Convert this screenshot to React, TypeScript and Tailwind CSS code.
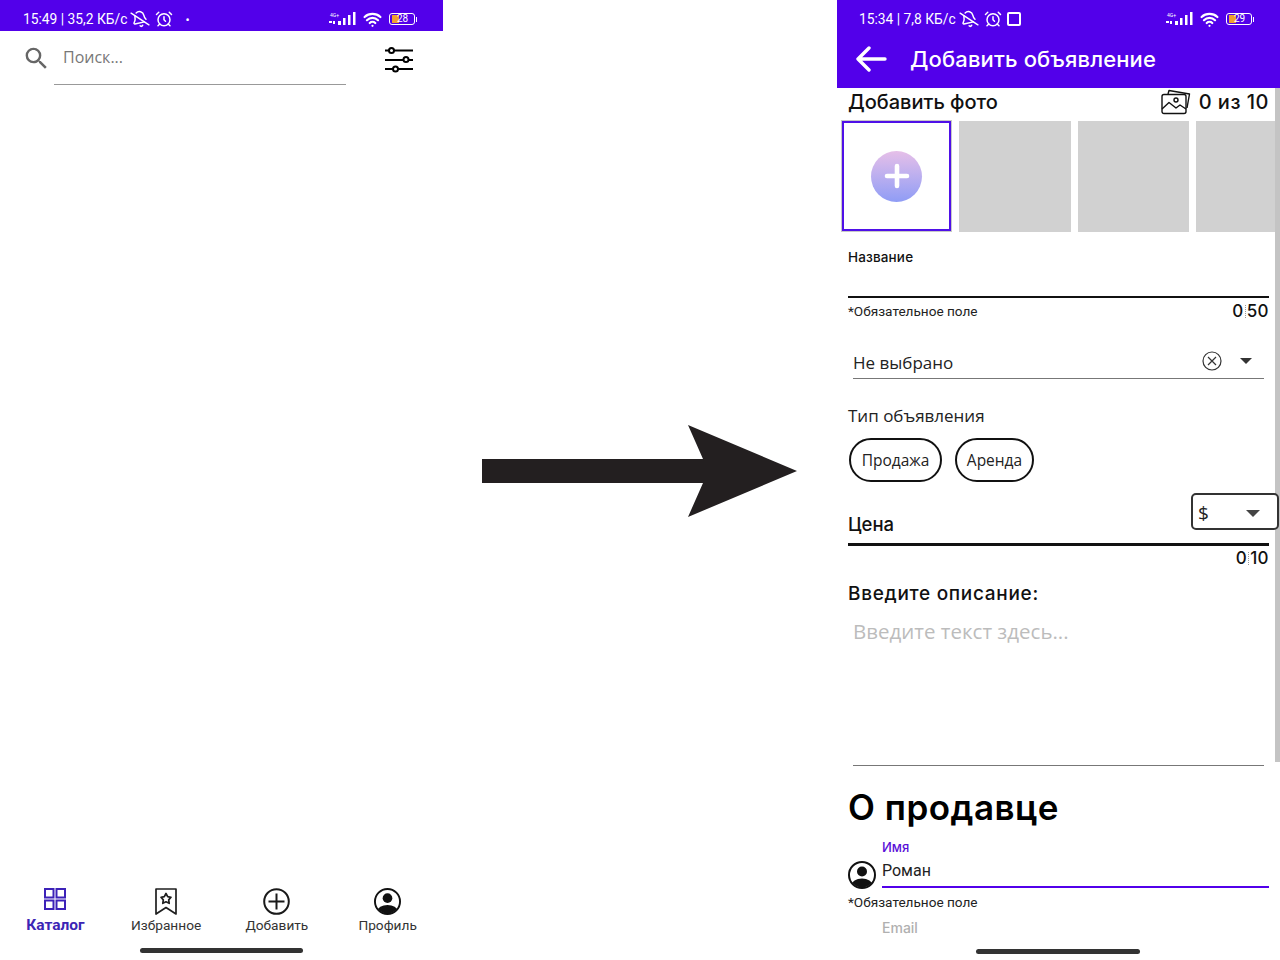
import { AlarmClock, BellOff, Wifi } from 'lucide-react';
import { MdSearch } from 'react-icons/md';

const roboto = { fontFamily: 'Roboto, sans-serif' };
const openSans = { fontFamily: '"Open Sans", sans-serif' };

const SignalIcon = () => (
  <svg width="27" height="14" viewBox="0 0 27 14" fill="white">
    <text x="1" y="5" fontSize="5" fill="white" style={roboto}>4G+</text>
    <rect x="0" y="9" width="3" height="2" />
    <rect x="4" y="9" width="2" height="3" />
    <rect x="9" y="9" width="3" height="4" />
    <rect x="14" y="6" width="2.5" height="7" />
    <rect x="19" y="3" width="2.5" height="10" />
    <rect x="24" y="0" width="2.5" height="13" />
  </svg>
);

const BatteryIcon = ({ level }: { level: string }) => (
  <div className="flex items-center">
    <div className="relative flex h-[12px] w-[26px] items-center rounded-[3px] border border-white">
      <div className="ml-[2px] h-[8px] w-[7px] bg-[#f0a030]" />
      <span className="absolute left-[7px] top-[-1px] text-[10px] leading-[12px] text-white" style={roboto}>{level}</span>
    </div>
    <div className="ml-[1px] h-[5px] w-[1px] bg-white" />
  </div>
);

const StatusBar = ({ label, children }: { label: string; children: React.ReactNode }) => (
  <div className="flex h-[38px] items-center justify-between pl-[23px] pr-[26px] text-white">
    <div className="flex items-center gap-[4px]">
      <span className="text-[13.8px] leading-[20px]" style={roboto}>{label}</span>
      {children}
    </div>
    <div className="flex items-center gap-[6px]">
      <SignalIcon />
      <Wifi className="h-[19px] w-[21px]" strokeWidth={2.8} />
      <BatteryIcon level={label.startsWith('15:49') ? '28' : '29'} />
    </div>
  </div>
);

const FilterIcon = () => (
  <svg width="30" height="26" viewBox="0 0 30 26" fill="none" stroke="black" strokeWidth="2">
    <path d="M1 3.5H29M1 13H29M1 22H29" />
    <circle cx="7.5" cy="3.5" r="2.5" fill="white" />
    <circle cx="22" cy="12.5" r="2.5" fill="white" />
    <circle cx="11.5" cy="22" r="2.5" fill="white" />
  </svg>
);

const GridIcon = () => (
  <svg width="22" height="22" viewBox="0 0 22 22" fill="none" stroke="#3d22b8" strokeWidth="2">
    <rect x="1" y="1" width="8.5" height="8.5" />
    <rect x="12.5" y="1" width="8.5" height="8.5" />
    <rect x="1" y="12.5" width="8.5" height="8.5" />
    <rect x="12.5" y="12.5" width="8.5" height="8.5" />
  </svg>
);

const BookmarkIcon = () => (
  <svg width="22" height="27" viewBox="0 0 22 27" fill="none" stroke="#1f1f1f" strokeWidth="1.7">
    <path d="M1 1H21V26L11 19.5L1 26Z" strokeLinejoin="round" />
    <path d="M11 5.5L12.7 8.7L16 9.3L13.7 11.9L14.2 15.3L11 13.8L7.8 15.3L8.3 11.9L6 9.3L9.3 8.7Z" strokeLinejoin="round" />
  </svg>
);

const PlusCircleIcon = () => (
  <svg width="27" height="27" viewBox="0 0 27 27" fill="none" stroke="#1a1a1a" strokeWidth="2">
    <circle cx="13.5" cy="13.5" r="12.3" />
    <path d="M13.5 5.5V21.5M5.5 13.5H21.5" />
  </svg>
);

const AvatarIcon = ({ size }: { size: number }) => (
  <svg width={size} height={size} viewBox="0 0 28 28">
    <defs>
      <clipPath id={`avatar-${size}`}>
        <circle cx="14" cy="14" r="12.5" />
      </clipPath>
    </defs>
    <circle cx="14" cy="14" r="13" fill="white" stroke="#111" strokeWidth="2" />
    <circle cx="14" cy="10.5" r="5" fill="#111" />
    <ellipse cx="14" cy="24" rx="10.5" ry="6.5" fill="#111" clipPath={`url(#avatar-${size})`} />
  </svg>
);

const GalleryIcon = () => (
  <svg width="30" height="26" viewBox="0 0 30 26" fill="none" stroke="#111" strokeWidth="1.4" strokeLinejoin="round">
    <path d="M7 5L8 1.5L28.5 5L26 19" />
    <rect x="1" y="5.5" width="24" height="19" rx="2" fill="white" />
    <circle cx="15" cy="11" r="2" />
    <path d="M1 20L8 13.5L15 19L19 16L25 20" />
  </svg>
);

const Counter = ({ left, right }: { left: string; right: string }) => (
  <div className="flex items-center font-medium text-[17px] leading-[16px] tracking-[0.4px] text-[#111]">
    {left}
    <span className="mx-[1px] h-[13px] border-l border-dotted border-[#999]" />
    {right}
  </div>
);

const navItems = [
  { label: 'Избранное', icon: <BookmarkIcon /> },
  { label: 'Добавить', icon: <PlusCircleIcon /> },
  { label: 'Профиль', icon: <AvatarIcon size={27} /> },
];

function CatalogPhone() {
  return (
    <div className="flex h-[960px] w-[443px] shrink-0 flex-col">
      <div className="h-[31px] overflow-hidden bg-[#5200ea]">
        <StatusBar label="15:49 | 35,2 КБ/с">
          <BellOff className="h-[18px] w-[18px] -rotate-12" />
          <AlarmClock className="ml-[2px] h-[18px] w-[18px]" />
          <span className="ml-[8px] text-[11px] leading-none">•</span>
        </StatusBar>
      </div>
      <div className="flex items-start pl-[25px] pr-[29px] pt-[16px]">
        <div className="h-[22px] w-[22px]">
          <MdSearch className="-ml-[3px] -mt-[3px] h-[29px] w-[29px] text-[#666]" />
        </div>
        <div className="ml-[7px] h-[38px] w-[292px] border-b border-[#999] pl-[9px]">
          <span className="block -translate-y-[1px] text-[16px] leading-[22px] text-[#777]" style={openSans}>Поиск...</span>
        </div>
        <div className="ml-auto">
          <FilterIcon />
        </div>
      </div>
      <div className="flex-1" />
      <div className="grid grid-cols-4">
        <div className="flex flex-col items-center">
          <div className="mt-[2px] flex h-[27px] items-start"><GridIcon /></div>
          <span className="text-[15.5px] font-bold leading-[20px] text-[#3b25b5]" style={roboto}>Каталог</span>
        </div>
        {navItems.map(item => (
          <div key={item.label} className="flex flex-col items-center">
            <div className="mt-[2px] flex h-[27px] items-start">{item.icon}</div>
            <span className="text-[13.7px] leading-[20px] text-[#333]" style={roboto}>{item.label}</span>
          </div>
        ))}
      </div>
      <div className="mb-[7px] ml-[140px] mt-[13px] h-[5px] w-[163px] rounded-full bg-[#333]" />
    </div>
  );
}

function ArrowDivider() {
  return (
    <div className="flex flex-1 items-center justify-center">
      <svg width="394" height="960" viewBox="443 0 394 960" fill="#231f20">
        <polygon points="482,459 703,459 688,425 797,471 688,517 703,483 482,483" />
      </svg>
    </div>
  );
}

function AddListingPhone() {
  return (
    <div className="relative h-[960px] w-[443px] shrink-0 overflow-hidden" style={{ fontFamily: 'Inter, sans-serif' }}>
      <div className="h-[88px] bg-[#5200ea]">
        <div className="-ml-[1px]">
          <StatusBar label="15:34 | 7,8 КБ/с">
            <BellOff className="h-[18px] w-[18px] -rotate-12" />
            <AlarmClock className="ml-[2px] h-[18px] w-[18px]" />
            <div className="ml-[1px] h-[14px] w-[14px] rounded-[2px] border-2 border-white" />
          </StatusBar>
        </div>
        <div className="flex h-[42px] items-center pl-[19px] text-white">
          <svg width="31" height="26" viewBox="0 0 31 26" fill="none" stroke="white" strokeWidth="3.4" strokeLinecap="round" strokeLinejoin="round">
            <path d="M29 13H3M13 2L2 13L13 24" />
          </svg>
          <span className="ml-[23px] text-[22px] font-medium leading-[28px] tracking-[0.15px]">Добавить объявление</span>
        </div>
      </div>

      <div className="flex h-[28px] items-center justify-between px-[11px]">
        <span className="text-[20px] font-medium leading-[24px] text-[#111]">Добавить фото</span>
        <div className="flex items-center gap-[8px]">
          <GalleryIcon />
          <span className="text-[20px] font-medium leading-[24px] tracking-[0.5px] text-[#111]">0 из 10</span>
        </div>
      </div>

      <div className="mt-[5px] flex gap-[7px] pl-[5px]">
        <div className="mr-[1px] flex h-[110px] w-[109px] shrink-0 items-center justify-center border-2 border-[#4f10e8] outline outline-1 outline-[#c8c8c8]">
          <div className="flex h-[51px] w-[51px] items-center justify-center rounded-full bg-gradient-to-b from-[#e6bfe8] to-[#8f9cf5]">
            <svg width="26" height="26" viewBox="0 0 26 26" stroke="white" strokeWidth="4.6" strokeLinecap="round">
              <path d="M13 3V23M3 13H23" />
            </svg>
          </div>
        </div>
        <div className="h-[111px] w-[111.5px] shrink-0 bg-[#d1d1d1]" />
        <div className="h-[111px] w-[111.5px] shrink-0 bg-[#d1d1d1]" />
        <div className="h-[111px] w-[111.5px] shrink-0 bg-[#d1d1d1]" />
      </div>

      <div className="px-[11px]">
        <div className="mt-[15px] text-[13.5px] font-medium leading-[20px] tracking-[0.15px] text-[#111]">Название</div>
        <div className="mt-[29px] h-[2px] bg-[#111]" />
        <div className="mt-[5px] flex h-[16px] items-center justify-between">
          <span className="text-[13.6px] leading-[16px] text-[#222]" style={roboto}>*Обязательное поле</span>
          <Counter left="0" right="50" />
        </div>
      </div>

      <div className="mx-[16px] mt-[32px] flex h-[24px] items-center justify-between">
        <span className="text-[17px] leading-[24px] text-[#222]" style={openSans}>Не выбрано</span>
        <div className="flex items-center">
          <svg width="20" height="20" viewBox="0 0 20 20" fill="none" stroke="#333" strokeWidth="1.2" className="-mt-[5px]">
            <circle cx="10" cy="10" r="9" />
            <path d="M6 6L14 14M14 6L6 14" />
          </svg>
          <div className="-mt-[5px] ml-[18px] mr-[12px] h-0 w-0 border-x-[6px] border-t-[6px] border-x-transparent border-t-[#333]" />
        </div>
      </div>
      <div className="mx-[16px] mt-[3px] h-[1px] bg-[#777]" />

      <div className="px-[11px]">
        <div className="mt-[25px] text-[17px] leading-[24px] text-[#222]" style={openSans}>Тип объявления</div>
        <div className="ml-[1px] mt-[10px] flex gap-[13px]">
          <div className="flex h-[44px] w-[93px] items-center justify-center rounded-full border-2 border-[#111] pt-[2px] text-[15.5px] text-[#222]" style={openSans}>Продажа</div>
          <div className="flex h-[44px] w-[79px] items-center justify-center rounded-full border-2 border-[#111] pt-[2px] text-[15.5px] text-[#222]" style={openSans}>Аренда</div>
        </div>

        <div className="mt-[11px] flex h-[43px] items-start justify-between">
          <span className="mt-[19px] text-[18.5px] font-medium leading-[24px] text-[#111]">Цена</span>
          {/* select sits over the scrollbar */}
          <div className="relative z-10 -mr-[10px] flex h-[37px] w-[88px] items-center justify-between rounded-[5px] border-2 border-[#333] bg-white pl-[5px] pr-[17px] pt-[3px]">
            <span className="text-[19px] text-[#222]" style={openSans}>$</span>
            <div className="h-0 w-0 border-x-[7px] border-t-[7px] border-x-transparent border-t-[#444]" />
          </div>
        </div>
        <div className="mt-[7px] h-[3px] bg-[#111]" />
        <div className="mt-[4px] flex h-[16px] justify-end">
          <Counter left="0" right="10" />
        </div>
        <div className="mt-[16px] text-[19px] font-medium leading-[24px] tracking-[0.7px] text-[#111]">Введите описание:</div>
      </div>

      <div className="mx-[16px] mt-[11px] text-[20.5px] leading-[28px] text-[#bcbcbc]" style={openSans}>Введите текст здесь...</div>
      <div className="mx-[16px] mt-[120px] h-[1px] bg-[#777]" />

      <div className="px-[11px]">
        <div className="mt-[19px] text-[35px] font-semibold leading-[44px] tracking-[0.5px] text-black">О продавце</div>
        <div className="ml-[34px] mt-[10px] text-[13px] font-medium leading-[16px] text-[#5a10d8]">Имя</div>
        <div className="mt-[6px] flex">
          <AvatarIcon size={28} />
          <div className="ml-[6px] flex-1">
            <div className="h-[20px] text-[16px] leading-[20px] text-[#222]" style={roboto}>Роман</div>
            <div className="mt-[5px] h-[2px] bg-[#5200ea]" />
          </div>
        </div>
        <div className="mt-[5px] text-[13.6px] leading-[16px] text-[#222]" style={roboto}>*Обязательное поле</div>
        <div className="ml-[34px] mt-[10px] text-[14px] font-medium leading-[16px] text-[#b0b0b0]">Email</div>
      </div>

      <div className="ml-[139px] mt-[13px] h-[5px] w-[164px] rounded-full bg-[#333]" />

      {/* scrollbar sits on top of the content */}
      <div className="absolute right-0 top-[88px] h-[674px] w-[5px] bg-[#c4c4c4]" />
    </div>
  );
}

export default function App() {
  return (
    <div className="flex h-[960px] w-[1280px] overflow-hidden bg-white">
      <CatalogPhone />
      <ArrowDivider />
      <AddListingPhone />
    </div>
  );
}
